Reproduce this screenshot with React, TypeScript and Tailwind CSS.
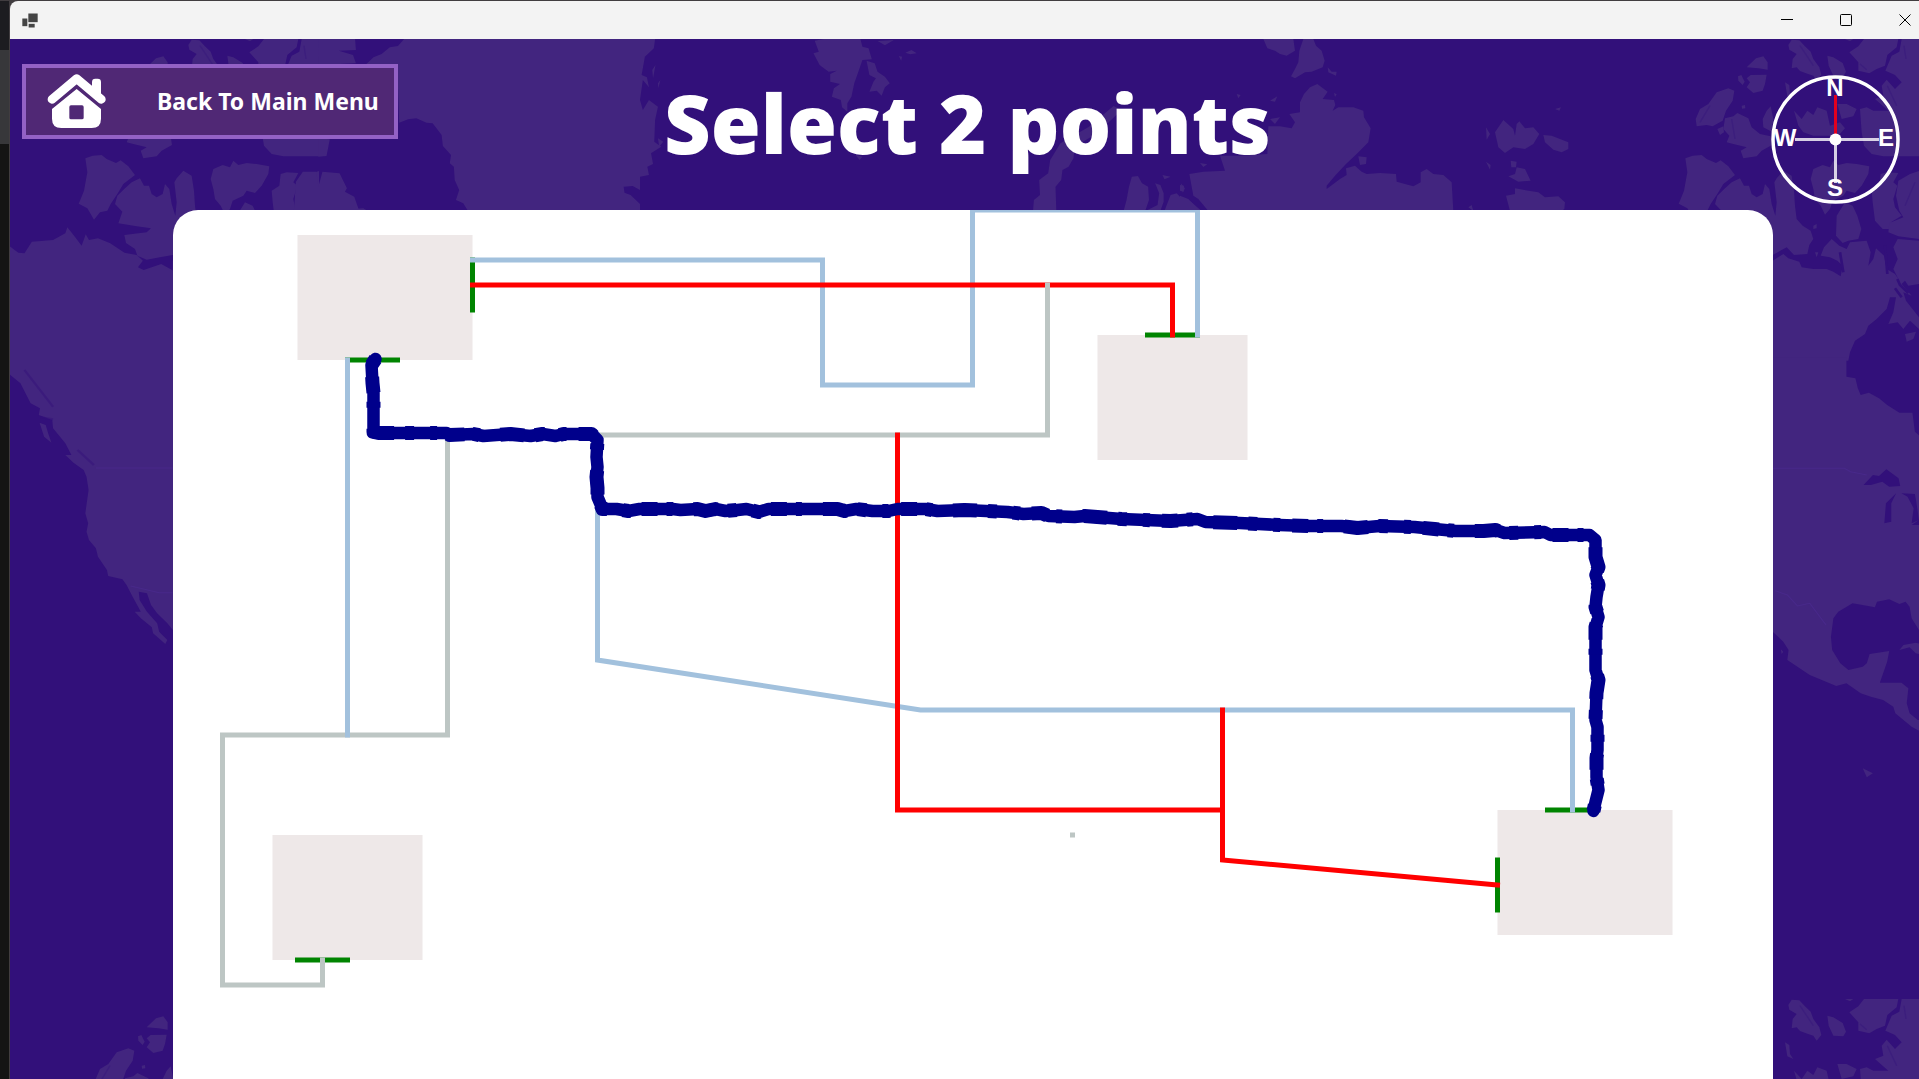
import React from "react";

const LAND = "#42257f";
const SEA = "#32107a";

/* Arctic archipelago, repeated wherever the map tile repeats. */
function Arctic() {
  return (
    <g transform="scale(0.33333)">
      <path d="M256,358 L278,350 L305,348 L320,360 L348,372 L362,364 L385,382 L405,408 L370,435 L352,465 L332,495 L322,515 L300,520 L282,542 L262,508 L236,494 L246,470 L252,455 L262,400Z" />
      <path d="M420,418 L395,430 L375,448 L352,470 L345,495 L367,518 L355,553 L410,562 L453,568 L440,580 L373,588 L378,612 L405,630 L412,650 L440,662 L480,655 L518,648 L560,625 L582,648 L622,645 L628,618 L640,600 L632,575 L608,560 L590,540 L585,500 L582,455 L575,410 L550,395 L530,418 L523,430 L530,490 L526,530 L515,495 L508,450 L495,435 L488,465 L470,475 L455,465 L447,440 L432,440Z" />
      <path d="M287,240 L300,210 L325,195 L350,160 L385,148 L403,155 L398,185 L378,215 L368,245 L350,255 L338,262 L320,258 L290,262Z M352,270 L370,262 L372,280 L360,288Z" />
      <path d="M375,238 L400,232 L412,222 L445,238 L455,265 L480,285 L512,292 L516,318 L485,335 L470,352 L430,358 L422,335 L440,325 L400,315 L380,310 L388,290 L370,270Z" />
      <path d="M440,85 L468,58 L490,52 L503,70 L503,92 L475,88Z M440,118 L452,108 L500,107 L495,135 L488,155 L460,162 L440,145 L450,130Z M414,112 L424,108 L434,128 L428,138 L415,125Z M425,200 L435,198 L436,208 L426,209Z" />
      <path d="M565,18 L575,2 L598,4 L615,22 L632,38 L640,60 L658,85 L664,108 L650,125 L640,110 L622,104 L600,96 L590,85 L575,88 L578,60 L590,45 L568,32Z M682,50 L700,55 L728,72 L738,98 L730,112 L700,110 L686,80Z M555,130 L568,138 L570,165 L580,180 L562,172Z" />
      <path d="M748,40 L775,22 L792,0 L895,0 L890,25 L862,48 L855,80 L830,90 L808,103 L775,95 L775,70Z" />
      <path d="M905,0 L957,0 L957,352 L850,352 L815,345 L792,320 L785,280 L780,210 L800,205 L820,215 L865,215 L825,180 L850,170 L845,140 L860,122 L885,150 L905,130 L885,108 L856,95 L875,50 L898,38Z" />
      <path d="M500,215 L512,202 L520,240 L515,278 L490,265 L488,240Z M582,215 L605,240 L622,215 L640,228 L652,205 L680,215 L690,260 L720,250 L735,268 L715,290 L640,290 L610,280 L595,260Z M712,195 L740,195 L770,210 L760,232 L725,240Z" />
      <path d="M632,420 L640,390 L668,378 L690,385 L700,365 L715,378 L740,372 L770,375 L808,382 L805,405 L785,440 L765,462 L740,455 L730,470 L698,485 L690,510 L675,527 L662,500 L645,480 L640,450Z" />
      <path d="M735,490 L758,500 L772,530 L784,570 L775,600 L745,605 L728,612 L708,590 L710,530Z" />
      <path d="M842,405 L860,400 L895,402 L880,430 L892,440 L880,480 L885,505 L905,530 L875,548 L870,570 L848,570 L825,545 L818,490 L815,455 L838,440Z" />
      <path d="M957,396 L930,405 L895,425 L888,470 L898,515 L910,535 L868,552 L865,580 L895,592 L957,600Z" />
      <path d="M518,665 L550,645 L565,658 L598,668 L605,685 L640,690 L680,690 L700,698 L722,712 L728,680 L712,665 L690,655 L662,650 L672,625 L695,600 L718,620 L740,630 L750,610 L800,605 L812,640 L805,680 L820,660 L828,628 L852,650 L860,690 L885,705 L895,720 L880,690 L893,660 L880,625 L893,600 L957,605 L957,735 L925,740 L915,725 L905,735 L935,770 L910,760 L918,785 L957,835 L957,870 L930,845 L910,870 L893,850 L865,855 L880,820 L888,775 L870,775 L860,810 L830,840 L805,860 L795,885 L765,905 L750,940 L745,965 L518,965Z M915,885 L948,878 L940,900 L920,908Z" />
      <path d="M640,560 L650,555 L650,568 L640,570Z M645,640 L655,640 L650,655Z M735,0 L760,0 L750,7Z" />
      <path d="M892,720 L900,738 L925,762 M885,748 L905,775 M720,640 L730,700 M855,620 L862,705" stroke={SEA} strokeWidth="8" fill="none" />
      <path d="M912,20 L918,60 M780,75 L800,92 M862,140 L890,200 M395,240 L405,300 M330,200 L300,250 M600,20 L640,80 M945,430 L915,500" stroke={SEA} strokeOpacity="0.35" strokeWidth="4" fill="none" />
    </g>
  );
}

function WorldMap() {
  return (
    <svg className="absolute inset-0 h-full w-full" fill={LAND} aria-hidden="true">
      <g transform="translate(1590,0)"><Arctic /></g>
      <g transform="translate(-10,0)"><Arctic /></g>
      <g transform="translate(1590,960)"><rect width="330" height="120" fill={SEA} /><Arctic /></g>
      <g transform="translate(-10,960)"><Arctic /></g>

      {/* Greenland */}
      <g transform="translate(-10,-39) scale(0.40816,0.33333)">
        <path d="M990,117 L975,138 L955,142 L935,162 L915,172 L895,195 L975,260 L978,368 L1000,358 L1020,355 L1045,368 L1060,370 L1082,405 L1085,438 L1105,465 L1102,490 L1112,500 L1114,540 L1125,570 L1117,600 L1135,610 L1150,640 L1568,640 L1568,612 L1545,585 L1530,578 L1528,560 L1550,558 L1568,570 L1568,530 L1590,525 L1586,500 L1600,492 L1595,460 L1620,440 L1603,425 L1605,360 L1612,320 L1590,300 L1575,330 L1568,300 L1575,240 L1590,262 L1585,232 L1572,225 L1580,170 L1602,145 L1605,117Z" />
        <path d="M1606,195 L1600,235 L1598,210Z M1618,240 L1613,265 L1612,250Z M1612,415 L1625,425 L1615,440Z" />
        <path d="M781,117 L870,117 L872,150 L830,152 L865,165 L872,190 L780,195Z M780,415 L808,418 L800,468 L780,470Z M742,515 L775,515 L780,560 L790,515 L832,520 L850,565 L845,575 L868,590 L880,632 L720,632 L725,545Z M860,628 L890,625 L900,632Z" />
      </g>

      {/* Iceland, Norway and the British Isles */}
      <g transform="translate(630,-39) scale(0.40816,0.33333)">
        <path d="M428,122 L450,117 L540,117 L545,140 L560,145 L568,178 L545,180 L535,215 L525,250 L518,290 L508,310 L508,335 L495,322 L492,300 L470,290 L475,265 L490,252 L466,245 L466,222 L482,212 L462,215 L440,195 L425,160 L438,155Z" />
        <path d="M555,182 L575,190 L582,215 L600,230 L612,250 L600,262 L592,287 L580,272 L562,275 L572,245 L578,235 L562,225Z M582,123 L622,120 L600,136Z M650,158 L665,150 L678,160 L662,163Z M634,168 L642,170 L640,182Z M528,465 L545,470 L538,480Z" />
        <path d="M1160,318 L1180,330 L1120,400 L1065,440 L1062,475 L1050,500 L1035,510 L1032,540 L1018,560 L1020,632 L963,632 L965,600 L980,585 L978,540 L1000,520 L1005,480 L1030,430 L1100,380Z" />
        <path d="M1205,530 L1220,528 L1230,550 L1245,560 L1247,600 L1238,632 L1185,632 L1192,600 L1198,560Z M1262,550 L1275,555 L1283,580 L1283,605 L1275,632 L1240,632 L1268,615 L1272,580Z M1285,632 L1300,585 L1315,580 L1330,600 L1350,605 L1375,632Z M1280,525 L1300,530 L1285,538Z M1325,550 L1335,565 L1330,578Z" />
        <path d="M1528,117 L1568,117 L1568,150 L1545,142Z" />
      </g>

      {/* Northern Europe */}
      <g transform="translate(1170,0) scale(0.33333)">
        <path d="M250,0 L340,0 L345,35 L320,50 L300,45 L285,35 L262,28Z M370,0 L400,0 L408,20 L425,35 L434,65 L428,85 L395,98 L375,100 L345,118 L333,112 L345,90 L355,70 L358,35Z M443,85 L455,98 L470,98 L468,110 L445,100Z M462,162 L470,166 L465,174Z" />
        <path d="M265,262 L300,262 L335,268 L345,250 L328,225 L360,220 L360,190 L372,165 L390,145 L412,135 L443,158 L428,180 L462,183 L466,198 L458,215 L475,205 L520,205 L550,215 L552,235 L572,268 L565,310 L530,345 L498,375 L465,410 L440,440 L440,450 L480,420 L500,408 L498,388 L525,380 L545,398 L560,405 L600,402 L648,405 L650,428 L700,442 L722,430 L722,400 L740,390 L760,405 L790,408 L815,430 L820,516 L85,516 L55,480 L40,470 L28,405 L70,398 L135,395 L120,350 L180,350 L262,345Z" />
        <path d="M535,352 L560,355 L558,375 L540,378Z M0,470 L25,480 L60,516 L0,516Z M270,185 L292,172 L285,188Z M270,240 L300,235 L285,255Z M170,165 L182,168 L175,178Z M60,372 L82,376 L70,384Z M0,438 L12,440 L10,458 L0,455Z" />
        <path d="M945,280 L970,243 L1000,270 L1005,290 L1010,255 L1018,247 L1035,268 L1060,265 L1078,285 L1060,315 L1035,330 L1000,325 L975,342 L955,325Z M1090,288 L1115,290 L1165,310 L1165,330 L1145,340 L1120,332 L1095,310Z M918,265 L930,285 L920,302Z M918,368 L932,378 L930,392Z M985,412 L1005,405 L1010,385 L1035,390 L1052,425 L1015,428Z M992,365 L1010,368 L1008,385 L994,385Z M978,470 L1005,465 L1005,448 L1075,460 L1095,475 L1135,472 L1155,490 L1153,510 L1145,516 L990,516Z M1125,210 L1143,205 L1138,215Z M865,505 L875,498 L880,516Z" />
      </g>

      {/* West coast of North America */}
      <g transform="translate(-10,301) scale(0.40816,0.33333)">
        <path d="M20,-285 L45,-262 L60,-260 L78,-295 L130,-300 L160,-320 L165,-338 L182,-312 L200,-283 L210,-317 L218,-300 L240,-305 L270,-290 L305,-262 L335,-255 L350,-238 L338,-218 L352,-210 L395,-228 L425,-208 L425,872 L410,850 L385,820 L370,795 L360,760 L340,755 L342,780 L360,815 L385,850 L390,875 L410,900 L405,912 L375,880 L372,862 L345,835 L330,815 L345,815 L325,770 L310,735 L300,718 L265,708 L262,690 L240,650 L235,625 L218,600 L212,575 L216,550 L209,520 L217,450 L212,410 L205,390 L180,368 L160,345 L175,345 L160,310 L130,265 L128,240 L95,225 L98,205 L75,190 L50,130 L20,100Z" />
        <path d="M97,248 L112,255 L118,280 L126,308 L108,290Z" />
        <path d="M100,232 L130,238 M190,330 L230,375 M60,90 L130,200" stroke={SEA} strokeOpacity="0.45" strokeWidth="6" fill="none" />
        <path d="M235,384 L423,384 M320,738 L390,758 L423,758" stroke="#48298a" strokeWidth="3" fill="none" />
      </g>

      {/* East coast, Gulf of Mexico and Central America */}
      <g transform="translate(1270,321) scale(0.4075,0.33333)">
        <path d="M1209,-8 L1390,-8 L1390,50 L1412,55 L1418,85 L1425,105 L1445,98 L1470,115 L1490,135 L1520,158 L1552,158 L1558,215 L1600,260 L1600,820 L1568,810 L1550,775 L1545,740 L1535,725 L1520,732 L1495,718 L1465,725 L1460,742 L1440,737 L1405,730 L1370,755 L1358,775 L1352,830 L1355,870 L1375,910 L1395,930 L1430,920 L1440,910 L1447,882 L1495,873 L1490,905 L1472,968 L1525,968 L1542,985 L1538,1030 L1545,1060 L1570,1085 L1600,1100 L1600,1120 L1568,1100 L1530,1080 L1510,1060 L1505,1040 L1480,1020 L1450,1010 L1425,1000 L1390,970 L1365,978 L1300,945 L1245,900 L1248,870 L1235,845 L1209,815Z" />
        <path d="M1520,870 L1530,855 L1560,848 L1600,860 L1600,890 L1560,880 L1545,862Z M1229,868 L1235,875 L1231,882Z" />
        <path d="M1432,375 L1455,345 L1470,348 L1488,328 L1518,355 L1522,378 L1495,380 L1478,365 L1450,375Z M1483,490 L1487,430 L1512,400 L1500,430 L1500,485Z M1525,400 L1558,402 L1562,430 L1568,480 L1550,490 L1555,445 L1540,410Z M1550,495 L1568,480 L1580,485 L1580,495Z" fill={SEA} />
        <path d="M1209,325 L1385,325 L1400,335 L1440,345 M1215,692 L1245,705 L1270,738 L1300,730 L1340,795" stroke="#48298a" strokeWidth="3" fill="none" />
        <path d="M1430,1225 L1455,1240 L1440,1252Z M1530,1080 L1580,1080 L1580,1120 L1550,1100Z" />
      </g>
    </svg>
  );
}

function HomeIcon() {
  return (
    <svg viewBox="140 220 177 165" className="h-[55px] w-[59px] shrink-0" aria-hidden="true">
      <rect x="275" y="234" width="27" height="54" rx="10" fill="#fff" />
      <path d="M155,296 L229,234 L303,296" fill="none" stroke="#fff" strokeWidth="26" strokeLinecap="round" strokeLinejoin="round" />
      <path fillRule="evenodd" fill="#fff" d="M229,265 L302,325 V354 Q302,382 274,382 H183 Q155,382 155,354 V325Z M212,314 Q207,314 207,319 V351 Q207,356 212,356 H245 Q250,356 250,351 V319 Q250,314 245,314Z" />
    </svg>
  );
}

function Compass() {
  return (
    <svg viewBox="0 0 130 130" className="mt-9 h-[130px] w-[130px] justify-self-end self-start" role="img" aria-label="Compass">
      <circle cx="64.5" cy="64.5" r="62.5" fill="none" stroke="#fff" strokeWidth="3.5" />
      <path d="M24,64.5 H108 M64.5,65 V108" stroke="#fff" strokeOpacity="0.8" strokeWidth="3" />
      <path d="M64.5,20 V60" stroke="#e3001f" strokeWidth="3" />
      <circle cx="64.5" cy="64.5" r="6" fill="#fff" />
      <g fill="#fff" fontFamily="Liberation Sans, Arial, sans-serif" fontWeight="bold" fontSize="24" textAnchor="middle">
        <text x="64" y="21">N</text>
        <text x="14" y="71">W</text>
        <text x="115" y="71">E</text>
        <text x="64" y="121">S</text>
      </g>
    </svg>
  );
}

const blocks = [
  { x: 125, y: 25, width: 175 },
  { x: 925, y: 125, width: 150 },
  { x: 100, y: 625, width: 150 },
  { x: 1325, y: 600, width: 175 },
];

const lines = [
  { color: "#008400", points: "175,150 225,150" },
  { color: "#008400", points: "300,50 300,100" },
  { color: "#008400", points: "975,125 1025,125" },
  { color: "#008400", points: "125,750 175,750" },
  { color: "#008400", points: "1375,600 1425,600" },
  { color: "#008400", points: "1325,650 1325,700" },
  { color: "#a2c1dd", points: "300,50 650,50 650,175 800,175 800,0 1025,0 1025,125" },
  { color: "#ff0000", points: "300,75 1000,75 1000,125" },
  { color: "#bdc6c4", points: "875,75 875,225 275,225 275,525 50,525 50,775 150,775 150,750" },
  { color: "#a2c1dd", points: "175,150 175,525" },
  { color: "#a2c1dd", points: "425,225 425,450 748,500 1400,500 1400,600" },
  { color: "#ff0000", points: "725,225 725,600 1050,600" },
  { color: "#ff0000", points: "1050,500 1050,650 1325,675" },
];

const route =
  "203,149 199,155 200,173 201,183 201,222 206,223 274,223 277,225 301,224 311,226 338,224 358,226 370,224 383,226 391,224 419,224 425,230 424,247 425,257 424,267 425,278 425,287 430,299 444,299 456,301 467,299 500,299 508,300 525,299 533,301 543,299 553,301 565,300 574,299 586,302 596,299 627,299 665,299 672,301 684,299 700,301 716,301 725,299 753,299 765,301 792,300 835,302 851,304 869,303 876,306 902,307 912,306 949,309 998,311 1025,309 1033,312 1067,313 1107,315 1136,316 1169,316 1185,318 1207,316 1242,317 1262,319 1283,321 1311,321 1323,320 1332,323 1372,322 1378,325 1417,325 1423,330 1423,347 1426,357 1423,365 1426,375 1424,387 1423,397 1426,407 1423,417 1423,460 1426,470 1424,483 1423,510 1425,517 1425,540 1424,548 1424,567 1426,580 1423,592 1421,601";

function Board() {
  return (
    <svg
      viewBox="0.5 0 1600 869"
      preserveAspectRatio="xMinYMin slice"
      className="absolute inset-0 h-full w-full"
      role="img"
      aria-label="Floor plan"
    >
      {blocks.map((b) => (
        <rect key={b.x} x={b.x} y={b.y} width={b.width} height="125" fill="#eee8e8" />
      ))}
      {lines.map((l) => (
        <polyline key={l.points} points={l.points} fill="none" stroke={l.color} strokeWidth="5" strokeLinecap="square" />
      ))}
      <rect x="897.5" y="622.5" width="5" height="5" fill="#bdc6c4" />
      <g fill="none" stroke="#00008b" strokeLinejoin="round">
        <polyline points={route} strokeWidth="12.5" strokeLinecap="round" />
        <polyline points={route} strokeWidth="14" strokeDasharray="7 12 16 9 6 21 24 11 9 16" />
      </g>
    </svg>
  );
}

function TitleBar() {
  return (
    <div className="flex h-[38px] items-center justify-between bg-[#f3f3f3] pl-3">
      <svg viewBox="66 33 48 44" className="h-[15px] w-4" fill="#444" aria-hidden="true">
        <rect x="85" y="34" width="28" height="26" />
        <rect x="67" y="49" width="15" height="23" />
        <rect x="86" y="65" width="18" height="11" />
      </svg>
      <div className="flex gap-[31px]">
        <button type="button" aria-label="Minimize" className="flex h-[38px] w-7 items-center justify-center">
          <svg viewBox="0 0 12 12" className="size-3" stroke="#000" fill="none"><path d="M0,5.5 H12" /></svg>
        </button>
        <button type="button" aria-label="Maximize" className="flex h-[38px] w-7 items-center justify-center">
          <svg viewBox="0 0 12 12" className="size-3" stroke="#000" fill="none"><rect x="0.5" y="0.5" width="11" height="11" rx="1" /></svg>
        </button>
        <button type="button" aria-label="Close" className="flex h-[38px] w-7 items-center justify-center">
          <svg viewBox="0 0 12 12" className="size-3" stroke="#000" fill="none"><path d="M0.5,0.5 L11.5,11.5 M11.5,0.5 L0.5,11.5" /></svg>
        </button>
      </div>
    </div>
  );
}

export default function App() {
  return (
    <div className="flex min-h-screen overflow-hidden bg-[#413d40] pt-px">
      <div className="flex w-[9px] shrink-0 flex-col">
        <div className="h-[49px] bg-[#1c1c20]" />
        <div className="h-[94px] bg-[#37373a]" />
        <div className="flex-1 bg-[#141414]" />
      </div>
      <div className="ml-px flex min-w-0 flex-1 flex-col overflow-hidden rounded-tl-lg">
        <TitleBar />
        <main className="relative flex flex-1 flex-col overflow-hidden bg-[#32107a]">
          <WorldMap />
          <header className="relative grid h-[171px] grid-cols-[1fr_auto_1fr] items-center pl-3 pr-[18px]">
            <button
              type="button"
              className="mt-[25px] flex h-[75px] w-[376px] items-center gap-[51px] self-start border-4 border-[#9361c5] bg-[#502875] pl-[21px] font-['Noto_Sans','Open_Sans',sans-serif] text-[23px] font-bold whitespace-nowrap text-white"
            >
              <HomeIcon />
              Back To Main Menu
            </button>
            <h1 className="pb-1 pl-3 font-['Noto_Sans','Open_Sans',sans-serif] text-[81px] leading-none font-black whitespace-nowrap text-white">
              Select 2 points
            </h1>
            <Compass />
          </header>
          <section className="relative mr-[146px] ml-[163px] flex-1 overflow-hidden rounded-t-[25px] bg-white">
            <Board />
          </section>
        </main>
      </div>
    </div>
  );
}
